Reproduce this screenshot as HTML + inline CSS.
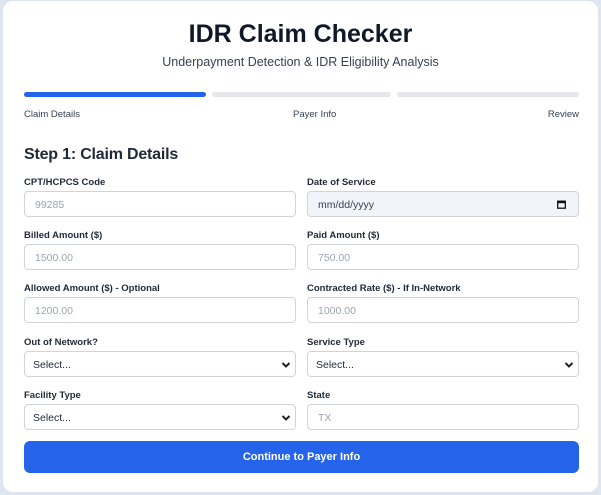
<!DOCTYPE html>
<html><head><style>
*{box-sizing:border-box;margin:0;padding:0}
body{width:601px;height:495px;background:#dfe5f0;font-family:"Liberation Sans",sans-serif;position:relative;overflow:hidden}
.card{position:absolute;left:3px;top:1px;width:595px;height:491px;background:#fff;border-radius:10px}
h1{position:absolute;left:0;width:601px;top:20px;text-align:center;font-size:25px;font-weight:bold;color:#111827}
.sub{position:absolute;left:0;width:601px;top:55px;text-align:center;font-size:12.5px;color:#374151}
.bar{position:absolute;top:92px;height:5px;border-radius:3px;background:#e5e7eb}
.sl{position:absolute;top:109px;font-size:9.5px;color:#374151}
h2{position:absolute;left:24px;top:146px;font-size:16px;font-weight:bold;color:#1f2937;letter-spacing:-0.2px}
.lab{position:absolute;font-size:9.5px;font-weight:bold;color:#1f2937}
.in{position:absolute;height:26px;width:272px;border:1px solid #d1d5db;border-radius:4px;font-size:10.5px;padding:7px 0 0 10px;color:#9ca3af;background:#fff}
.sel{color:#1f2937;padding-left:8px}
.sel svg{position:absolute;right:4px;top:9px}
.btn{position:absolute;left:24px;top:441px;width:555px;height:32px;background:#2563eb;border-radius:6px;color:#fff;font-size:11px;font-weight:bold;text-align:center;line-height:32px}
</style></head><body>
<div class="card"></div>
<h1>IDR Claim Checker</h1>
<div class="sub">Underpayment Detection &amp; IDR Eligibility Analysis</div>
<div class="bar" style="left:24px;width:182px;background:#2563eb"></div>
<div class="bar" style="left:212px;width:179px"></div>
<div class="bar" style="left:397px;width:182px"></div>
<div class="sl" style="left:24px">Claim Details</div>
<div class="sl" style="left:293px">Payer Info</div>
<div class="sl" style="right:22px">Review</div>
<h2>Step 1: Claim Details</h2>

<div class="lab" style="left:24px;top:177px">CPT/HCPCS Code</div>
<div class="lab" style="left:307px;top:177px">Date of Service</div>
<div class="in" style="left:24px;top:191px">99285</div>
<div class="in" style="left:307px;top:191px;background:#f1f4f8;color:#374151">mm/dd/yyyy<svg style="position:absolute;right:12px;top:8px" width="9" height="9" viewBox="0 0 9 9"><rect x="0.7" y="1.2" width="7.6" height="7" fill="none" stroke="#111" stroke-width="1.3"/><rect x="0.7" y="1.2" width="7.6" height="2" fill="#111"/></svg></div>

<div class="lab" style="left:24px;top:230px">Billed Amount ($)</div>
<div class="lab" style="left:307px;top:230px">Paid Amount ($)</div>
<div class="in" style="left:24px;top:244px">1500.00</div>
<div class="in" style="left:307px;top:244px">750.00</div>

<div class="lab" style="left:24px;top:283px">Allowed Amount ($) - Optional</div>
<div class="lab" style="left:307px;top:283px">Contracted Rate ($) - If In-Network</div>
<div class="in" style="left:24px;top:297px">1200.00</div>
<div class="in" style="left:307px;top:297px">1000.00</div>

<div class="lab" style="left:24px;top:337px">Out of Network?</div>
<div class="lab" style="left:307px;top:337px">Service Type</div>
<div class="in sel" style="left:24px;top:351px">Select...<svg width="10" height="8" viewBox="0 0 10 8"><path d="M1.5 2 L5 5.5 L8.5 2" fill="none" stroke="#222" stroke-width="2"/></svg></div>
<div class="in sel" style="left:307px;top:351px">Select...<svg width="10" height="8" viewBox="0 0 10 8"><path d="M1.5 2 L5 5.5 L8.5 2" fill="none" stroke="#222" stroke-width="2"/></svg></div>

<div class="lab" style="left:24px;top:390px">Facility Type</div>
<div class="lab" style="left:307px;top:390px">State</div>
<div class="in sel" style="left:24px;top:404px">Select...<svg width="10" height="8" viewBox="0 0 10 8"><path d="M1.5 2 L5 5.5 L8.5 2" fill="none" stroke="#222" stroke-width="2"/></svg></div>
<div class="in" style="left:307px;top:404px">TX</div>

<div class="btn">Continue to Payer Info</div>
</body></html>
